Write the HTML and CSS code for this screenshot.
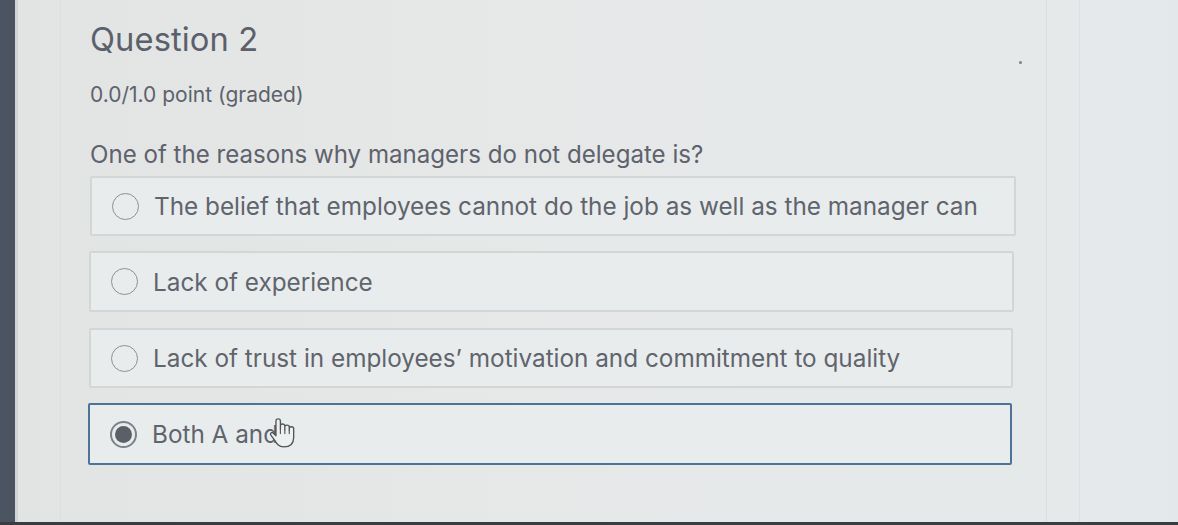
FILE: index.html
```html
<!DOCTYPE html>
<html>
<head>
<meta charset="utf-8">
<link rel="stylesheet" href="styles.css">
</head>
<body>
<div class="screen">
  <div class="rail"></div>
  <div class="edge"></div>
  <div class="gutter"></div>
  <main class="content">
    <h1 class="title">Question 2</h1>
    <p class="score">0.0/1.0 point (graded)</p>
    <p class="prompt">One of the reasons why managers do not delegate is?</p>
    <div class="options">
      <label class="option"><span class="radio"></span><span class="label">The belief that employees cannot do the job as well as the manager can</span></label>
      <label class="option"><span class="radio"></span><span class="label">Lack of experience</span></label>
      <label class="option"><span class="radio"></span><span class="label">Lack of trust in employees’ motivation and commitment to quality</span></label>
      <label class="option selected"><span class="radio"></span><span class="label">Both A and<svg class="cursor" width="29" height="31" viewBox="0 0 26 28"><path d="M8 17 L5.5 14.5 C4.2 13.2 2.2 14.8 3.4 16.3 L7.2 21.5 C9 24.5 10.5 27 15 27 C20.5 27 24 24 24 18.5 L24 10.5 C24 8.2 20 8.2 20 10.5 L20 12 L20 9 C20 6.8 16 6.8 16 9 L16 11.5 L16 8 C16 5.8 12 5.8 12 8 L12 11 L12 3.5 C12 1 8 1 8 3.5 Z" fill="#eef0f0" stroke="#4f545b" stroke-width="1.2" stroke-linejoin="round" stroke-linecap="round"/><path d="M12 11 V15 M16 11.5 V15 M20 12 V15" stroke="#4f545b" stroke-width="1" fill="none" stroke-linecap="round"/></svg></span></label>
    </div>
  </main>
  <div class="side">
    <div class="dot"></div>
  </div>
  <div class="side2"></div>
</div>
<div class="bottom"></div>
</body>
</html>
```

FILE: styles.css
```css
html, body {
  margin: 0;
  padding: 0;
}
body {
  width: 1178px;
  height: 525px;
  overflow: hidden;
  font-family: Inter, "Liberation Sans", sans-serif;
  background: #e4e7e8;
  color: #5d626c;
}
.screen {
  display: flex;
  height: 522px;
  background: linear-gradient(90deg, #e2e4e4 0%, #e6e8e8 40%, #e6e9ea 85%, #e3e8ea 100%);
}
.rail {
  width: 15px;
  flex: none;
  background: #4b5561;
}
.edge {
  width: 3px;
  flex: none;
  background: #d2d4d5;
}
.gutter {
  width: 42px;
  flex: none;
  border-right: 1px solid #dcdfe0;
}
.content {
  width: 926px;
  flex: none;
  padding-left: 29px;
  box-sizing: content-box;
}
.title {
  margin: 19px 0 0;
  font-size: 32.7px;
  font-weight: 400;
  line-height: 40px;
  letter-spacing: 0.1px;
  color: #5b606a;
}
.score {
  margin: 22px 0 0;
  font-size: 21px;
  line-height: 27px;
  color: #5d626c;
}
.prompt {
  margin: 32px 0 0;
  font-size: 24.1px;
  line-height: 30px;
  color: #5d626c;
}
.options {
  display: flex;
  flex-direction: column;
  gap: 15px;
  margin-top: 6px;
}
.option {
  display: flex;
  align-items: center;
  height: 60px;
  box-sizing: border-box;
  border: 2px solid #d3d6d7;
  border-radius: 2px;
  background: #e9ecec;
  padding-left: 20px;
  font-size: 24.3px;
  color: #5f646d;
}
.option:nth-child(2) { margin-left: -1px; width: 925px; height: 61px; }
.option:nth-child(3) { margin-left: -1px; width: 924px; margin-top: 1px; }
.option.selected {
  margin-left: -2px;
  width: 924px;
  height: 62px;
  border: 2px solid #4d7399;
}
.radio {
  width: 27px;
  height: 27px;
  box-sizing: border-box;
  border: 1.5px solid #8b9098;
  border-radius: 50%;
  flex: none;
  margin-right: 15px;
  position: relative;
}
.selected .radio {
  border: 2px solid #7d828a;
}
.selected .radio::after {
  content: "";
  position: absolute;
  left: 3px;
  top: 3px;
  width: 17px;
  height: 17px;
  border-radius: 50%;
  background: #5b6068;
}
.label {
  position: relative;
  white-space: nowrap;
}
.cursor {
  position: absolute;
  left: 115px;
  top: -2px;
}
.side {
  width: 30px;
  flex: none;
  border-right: 1px solid #d8dfe1;
  position: relative;
}
.dot {
  position: absolute;
  left: 3px;
  top: 61px;
  width: 3px;
  height: 3px;
  border-radius: 50%;
  background: #7d8084;
}
.side2 {
  width: 32px;
  flex: none;
  border-right: 1px solid #d9e0e2;
}
.bottom {
  height: 3px;
  background: #3a3d40;
}
```
